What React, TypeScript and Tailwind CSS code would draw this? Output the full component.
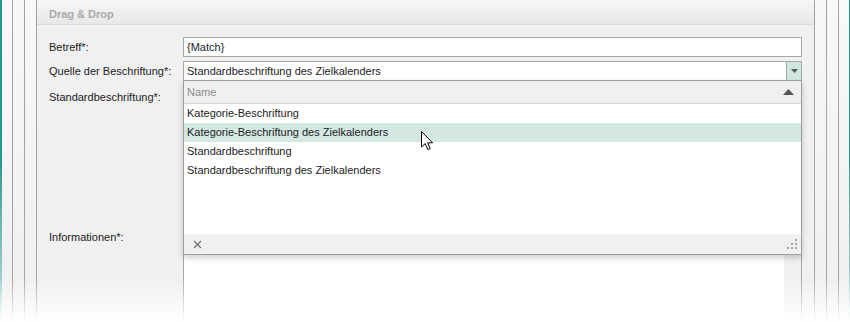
import React from 'react'

const font = { fontFamily: '"Liberation Sans", Arial, sans-serif' }

const items = [
  'Kategorie-Beschriftung',
  'Kategorie-Beschriftung des Zielkalenders',
  'Standardbeschriftung',
  'Standardbeschriftung des Zielkalenders',
]

const Cursor = () => (
  <svg width="13" height="20" viewBox="0 0 13 20" className="absolute left-[421px] top-[131px]">
    <path d="M0.5 0.5 L0.5 16 L4.2 12.6 L6.8 18.6 L9.2 17.6 L6.7 11.8 L11.6 11.8 Z" fill="#fff" stroke="#000" strokeWidth="1" strokeLinejoin="miter" />
  </svg>
)

const Grip = () => (
  <svg width="11" height="11" viewBox="0 0 11 11">
    <rect x="8" y="0" width="2" height="2" fill="#a8a8a8" />
    <rect x="4" y="4" width="2" height="2" fill="#a8a8a8" />
    <rect x="8" y="4" width="2" height="2" fill="#a8a8a8" />
    <rect x="0" y="8" width="2" height="2" fill="#a8a8a8" />
    <rect x="4" y="8" width="2" height="2" fill="#a8a8a8" />
    <rect x="8" y="8" width="2" height="2" fill="#a8a8a8" />
  </svg>
)

const Dropdown = () => (
  <div className="absolute left-[183px] top-[80px] w-[619px] h-[175px] bg-white border border-[#9c9c9c] shadow-[0_3px_6px_rgba(0,0,0,0.18)] flex flex-col">
    <div className="h-[23px] shrink-0 bg-[#f0f0f0] border-b border-[#d4d4d4] flex items-center justify-between pl-[3px] pr-[7px]">
      <span className="text-[#8a8a8a]">Name</span>
      <svg width="11" height="6" viewBox="0 0 11 6"><path d="M0 6 L5.5 0 L11 6 Z" fill="#555" /></svg>
    </div>
    <div className="flex-1 flex flex-col">
      {items.map((t, i) => (
        <div key={t} className={`h-[19px] flex items-center pl-[3px] text-[#222] ${i === 1 ? 'bg-[#d3e8e2]' : ''}`}>{t}</div>
      ))}
    </div>
    <div className="h-[20px] shrink-0 bg-[#f0f0f0] flex items-center justify-between pl-[9px] pr-[3px]">
      <svg width="9" height="9" viewBox="0 0 9 9"><path d="M1 1 L8 8 M8 1 L1 8" stroke="#707070" strokeWidth="1.2" /></svg>
      <Grip />
    </div>
  </div>
)

const Strip = ({ side }: { side: 'l' | 'r' }) => (
  <div className={`flex h-full shrink-0 ${side === 'l' ? '' : 'flex-row-reverse'}`}>
    <div className={`h-full bg-gradient-to-b from-[#1f9a93] via-[#1f9a93] to-[#bfe3e0] ${side === 'r' ? 'w-[1px]' : 'w-[2px]'}`} />
    <div className={`w-[11px] h-full bg-gradient-to-b from-[#f9f9f9] to-[#efefef] ${side === 'l' ? 'border-r' : 'border-l'} border-[#a2a2a2]`} />
    <div className={`w-[12px] h-full bg-gradient-to-b from-[#f8f8f8] to-[#efefef] ${side === 'l' ? 'border-r' : 'border-l'} border-[#a2a2a2]`} />
    <div className={`w-[12px] h-full bg-gradient-to-b from-[#f8f8f8] to-[#efefef] ${side === 'l' ? 'border-r' : 'border-l'} border-[#a2a2a2]`} />
  </div>
)

const Field = ({ children, button }: { children?: React.ReactNode; button?: boolean }) => (
  <div className="h-[20px] bg-white border border-[#a6a6a6] flex items-center pl-[3px] text-[#222]">
    <span className="flex-1">{children}</span>
    {button && (
      <div className="w-[15px] h-full bg-[#cfe6df] border-l border-[#a6a6a6] flex items-center justify-center">
        <svg width="7" height="4" viewBox="0 0 7 4"><path d="M0 0 L7 0 L3.5 4 Z" fill="#555" /></svg>
      </div>
    )}
  </div>
)

export default function App() {
  return (
    <div className="relative w-[850px] h-[322px] overflow-hidden bg-[#f0f0f0] flex text-[11px]" style={font}>
      <Strip side="l" />
      <div className="flex-1 flex flex-col min-h-0 overflow-hidden">
        <div className="h-[25px] shrink-0 bg-gradient-to-b from-[#f6f6f6] to-[#e8e8e8] border-b border-[#dadada] flex items-center pl-3 pt-[5px]">
          <span className="font-bold text-[#a8a8a8] text-[11px]">Drag &amp; Drop</span>
        </div>
        <div className="grid grid-cols-[146px_1fr] gap-y-[4px] pt-[12px] pr-[12px] content-start">
          <div className="pl-3 h-[20px] flex items-center text-[#222]">Betreff*:</div>
          <Field>{'{Match}'}</Field>
          <div className="pl-3 h-[20px] flex items-center text-[#222]">Quelle der Beschriftung*:</div>
          <Field button>Standardbeschriftung des Zielkalenders</Field>
          <div className="pl-3 pt-[4px] text-[#222]">Standardbeschriftung*:</div>
          <div className="h-[138px] bg-white border border-[#a6a6a6]" />
          <div className="pl-3 pt-[2px] text-[#222]">Informationen*:</div>
          <div className="h-[120px] bg-white border-l border-r border-[#a6a6a6] flex">
            <div className="flex-1" />
            <div className="w-[17px] bg-[#f0f0f0]" />
          </div>
        </div>
      </div>
      <Strip side="r" />
      <Dropdown />
      <Cursor />
      <div className="absolute left-0 bottom-0 w-full h-[45px] bg-gradient-to-b from-transparent to-white pointer-events-none" />
    </div>
  )
}
